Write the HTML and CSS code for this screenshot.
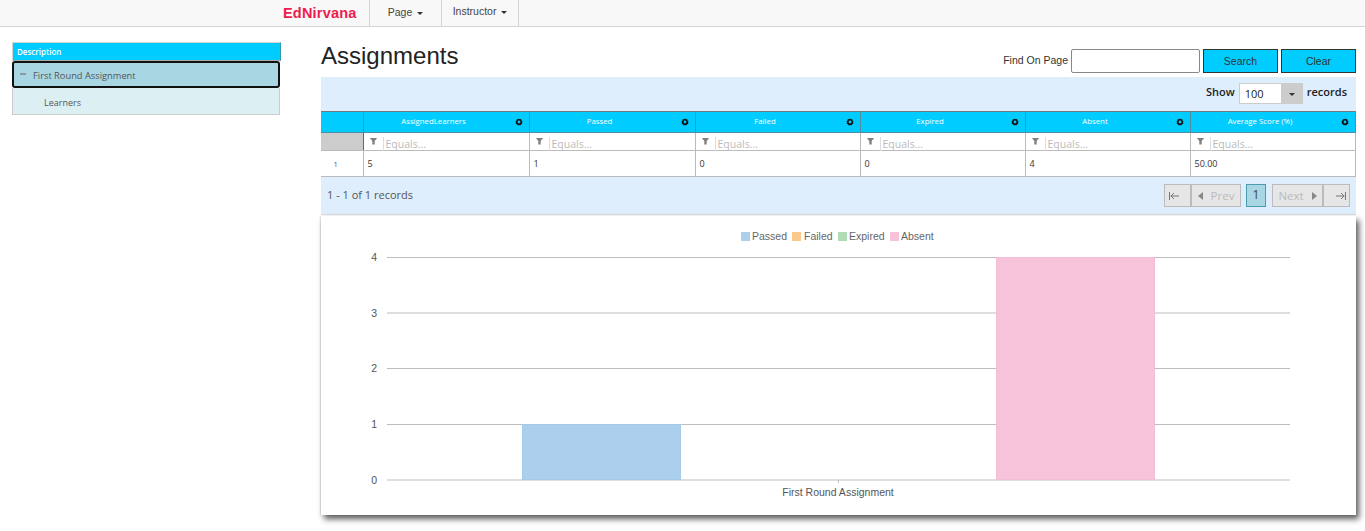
FILE: index.html
```html
<!DOCTYPE html>
<html lang="en">

<head>
    <meta charset="UTF-8">
    <meta name="viewport" content="width=device-width, initial-scale=1.0">
    <title>Assignments</title>
    <link rel="stylesheet" href="styles.css">
</head>

<body>
    <nav class="navbar">
        <a class="brand">EdNirvana</a>
        <a class="nav-item">Page <span class="caret"></span></a>
        <a class="nav-item nav-item-up">Instructor <span class="caret"></span></a>
    </nav>

    <div class="page">
        <aside class="tree">
            <div class="tree-head">Description</div>
            <div class="tree-row tree-selected"><span class="tree-minus"></span>First Round Assignment</div>
            <div class="tree-row tree-child">Learners</div>
        </aside>

        <main class="main">
            <div class="title-row">
                <h1>Assignments</h1>
                <form class="find-form">
                    <label for="find">Find On Page</label>
                    <input id="find" class="find-input" type="text">
                    <button class="btn" type="button">Search</button>
                    <button class="btn" type="button">Clear</button>
                </form>
            </div>

            <div class="toolbar">
                <span>Show</span>
                <div class="page-size">
                    <span class="page-size-value">100</span>
                    <span class="page-size-arrow"><span class="caret"></span></span>
                </div>
                <span>records</span>
            </div>

            <table class="grid">
                <colgroup>
                    <col class="col-index">
                    <col span="2" class="col-wide">
                    <col span="4" class="col-data">
                </colgroup>
                <thead>
                    <tr class="head-row">
                        <th></th>
                        <th>AssignedLearners<svg class="gear" viewBox="0 0 8 8"><use href="#gear"></use></svg></th>
                        <th>Passed<svg class="gear" viewBox="0 0 8 8"><use href="#gear"></use></svg></th>
                        <th>Failed<svg class="gear" viewBox="0 0 8 8"><use href="#gear"></use></svg></th>
                        <th>Expired<svg class="gear" viewBox="0 0 8 8"><use href="#gear"></use></svg></th>
                        <th>Absent<svg class="gear" viewBox="0 0 8 8"><use href="#gear"></use></svg></th>
                        <th>Average Score (%)<svg class="gear" viewBox="0 0 8 8"><use href="#gear"></use></svg></th>
                    </tr>
                    <tr class="filter-row">
                        <td class="filter-blank"></td>
                        <td><span class="funnel"></span><span class="filter-text">Equals...</span></td>
                        <td><span class="funnel"></span><span class="filter-text">Equals...</span></td>
                        <td><span class="funnel"></span><span class="filter-text">Equals...</span></td>
                        <td><span class="funnel"></span><span class="filter-text">Equals...</span></td>
                        <td><span class="funnel"></span><span class="filter-text">Equals...</span></td>
                        <td><span class="funnel"></span><span class="filter-text">Equals...</span></td>
                    </tr>
                </thead>
                <tbody>
                    <tr class="data-row">
                        <td class="row-num">1</td>
                        <td>5</td>
                        <td>1</td>
                        <td>0</td>
                        <td>0</td>
                        <td>4</td>
                        <td>50.00</td>
                    </tr>
                </tbody>
            </table>

            <div class="pager">
                <span class="pager-info">1 - 1 of 1 records</span>
                <div class="pager-buttons">
                    <div class="pager-group">
                        <span class="pager-btn pager-edge pager-first">
                            <svg class="pager-icon" viewBox="0 0 10 8"><path d="M.5 0v8M10 4H1.5M5 1 2 4l3 3" fill="none" stroke="#777" stroke-width="1"/></svg>
                        </span>
                        <span class="pager-btn"><span class="tri-left"></span>Prev</span>
                    </div>
                    <span class="pager-current">1</span>
                    <div class="pager-group">
                        <span class="pager-btn pager-next">Next<span class="tri-right"></span></span>
                        <span class="pager-btn pager-edge pager-last">
                            <svg class="pager-icon" viewBox="0 0 10 8"><path d="M9.5 0v8M0 4h8.5M5 1l3 3-3 3" fill="none" stroke="#777" stroke-width="1"/></svg>
                        </span>
                    </div>
                </div>
            </div>

            <section class="chart-card">
                <svg class="chart" width="1035" height="299" viewBox="321 216 1035 299">
                    <g class="legend">
                        <rect x="741" y="232" width="9" height="9" fill="#abcfed"/>
                        <text x="752" y="240">Passed</text>
                        <rect x="792" y="232" width="9" height="9" fill="#fbc98c"/>
                        <text x="804" y="240">Failed</text>
                        <rect x="838" y="232" width="9" height="9" fill="#afdcb4"/>
                        <text x="849" y="240">Expired</text>
                        <rect x="890" y="232" width="9" height="9" fill="#f7c3da"/>
                        <text x="901" y="240">Absent</text>
                    </g>
                    <g class="gridlines">
                        <path d="M387 257.5H1290M387 313H1290M387 368.5H1290M387 424.5H1290M387 480H1290M838.5 480v3"/>
                    </g>
                    <rect class="bar-passed" x="522.5" y="424.5" width="158" height="55"/>
                    <rect class="bar-absent" x="996.5" y="257.5" width="158" height="222"/>
                    <g class="axis-y">
                        <text x="377" y="261">4</text>
                        <text x="377" y="317">3</text>
                        <text x="377" y="372">2</text>
                        <text x="377" y="428">1</text>
                        <text x="377" y="484">0</text>
                    </g>
                    <text class="axis-x" x="838" y="496">First Round Assignment</text>
                </svg>
            </section>
        </main>
    </div>

    <svg class="defs" width="0" height="0">
        <symbol id="gear" viewBox="0 0 8 8">
            <path d="M4 0.4 4.8 1.3 6.2 1 6.4 2.4 7.6 3.2 6.9 4.4 7.4 5.7 6 6.2 5.3 7.5 4 6.9 2.7 7.5 2 6.2 .6 5.7 1.1 4.4 .4 3.2 1.6 2.4 1.8 1 3.2 1.3Z" fill="#111"/>
            <circle cx="4" cy="4" r="1.4" fill="#0cf"/>
        </symbol>
    </svg>
</body>

</html>
```

FILE: styles.css
```css
* {
    box-sizing: border-box;
}

body {
    margin: 0;
    min-height: 531px;
    background: #fff;
    font-family: 'Open Sans', 'Noto Sans', sans-serif;
    color: #333;
}

.navbar {
    display: flex;
    height: 27px;
    padding-left: 283px;
    background: #f8f8f8;
    border-bottom: 1px solid #d4d4d4;
    font-family: 'Liberation Sans', Arial, sans-serif;
}

.brand {
    width: 86px;
    padding-top: 5px;
    font-size: 14.5px;
    font-weight: bold;
    color: #ee1c4e;
    letter-spacing: .2px;
}

.nav-item {
    width: 72px;
    height: 26px;
    padding-top: 6px;
    border-left: 1px solid #d4d4d4;
    font-size: 10.5px;
    color: #444;
    text-align: center;
}

.nav-item-up {
    width: 78px;
    padding-top: 5px;
    border-right: 1px solid #d4d4d4;
}

.caret {
    display: inline-block;
    vertical-align: middle;
    margin-left: 2px;
    border-top: 3px solid #333;
    border-left: 3px solid transparent;
    border-right: 3px solid transparent;
}

.page {
    display: flex;
    align-items: flex-start;
}

.tree {
    width: 269px;
    margin: 15px 0 0 12px;
    font-size: 9px;
}

.tree-head {
    height: 19px;
    padding: 3px 4px;
    background: #0cf;
    border: 1px solid #d6d6d6;
    border-right: 1px solid #39a;
    border-bottom: 1px solid #aaa;
    font-size: 8px;
    font-weight: 600;
    color: #fff;
}

.tree-row {
    width: 268px;
    display: flex;
    align-items: center;
    padding-top: 2px;
    color: #555;
}

.tree-selected {
    height: 27px;
    padding-left: 6px;
    background: #a8d6e3;
    border: 2px solid #111;
    border-radius: 3px;
    font-size: 9.3px;
}

.tree-minus {
    width: 6px;
    height: 2px;
    margin: -4px 7px 0 0;
    background: #8a9aa0;
}

.tree-child {
    height: 27px;
    padding-left: 31px;
    background: #dcf0f4;
    border: 1px solid #ccc;
    border-top: 0;
}

.main {
    width: 1035px;
    margin-left: 40px;
}

.title-row {
    display: flex;
    align-items: flex-start;
    justify-content: space-between;
    height: 50px;
}

h1 {
    margin: 0;
    padding-top: 15px;
    font-family: 'Liberation Sans', Arial, sans-serif;
    font-size: 24px;
    font-weight: normal;
    color: #222;
}

.find-form {
    display: flex;
    align-items: center;
    margin: 22px 0 0 0;
    font-family: 'Liberation Sans', Arial, sans-serif;
    font-size: 10.5px;
    color: #333;
}

.find-form label {
    margin: -2px 3px 0 0;
}

.find-input {
    width: 129px;
    height: 24px;
    margin-right: 3px;
    background: #fff;
    border: 1px solid #888;
    border-radius: 2px;
}

.btn {
    width: 75px;
    height: 24px;
    margin-right: 3px;
    padding: 0;
    background: #0cf;
    border: 1px solid #333;
    font: inherit;
    color: #333;
}

.btn:last-child {
    margin-right: 0;
}

.toolbar {
    display: flex;
    align-items: center;
    justify-content: flex-end;
    gap: 4px;
    height: 34px;
    padding: 0 9px 5px 0;
    background: #deeefd;
    font-size: 11px;
    font-weight: 600;
    color: #222;
}

.page-size {
    display: flex;
    width: 64px;
    height: 21px;
    margin: 3px 0 0;
    background: #fff;
    border: 1px solid #ccc;
    font-weight: normal;
}

.page-size-value {
    flex: 1;
    padding: 2px 0 0 5px;
}

.page-size-arrow {
    display: flex;
    align-items: center;
    justify-content: center;
    width: 21px;
    padding-top: 2px;
    background: #ccc;
}

.grid {
    width: 1034px;
    table-layout: fixed;
    border-collapse: collapse;
}

.col-index {
    width: 42px;
}

.col-wide {
    width: 166px;
}

.col-data {
    width: 165px;
}

.head-row {
    height: 21px;
}

.grid th {
    position: relative;
    padding: 0 25px 0 0;
    background: #0cf;
    border: 1px solid #4f8fa3;
    border-top-color: #777;
    font-size: 7.8px;
    line-height: 1;
    font-weight: 400;
    color: #fff;
}

.grid th:first-child {
    border-left: 0;
}

.gear {
    position: absolute;
    top: 6px;
    right: 6px;
    width: 8px;
    height: 8px;
}

.defs {
    position: absolute;
}

.filter-row {
    height: 18px;
}

.filter-row td {
    padding: 0 0 0 6px;
    background: #fff;
    border: 1px solid #bbb;
    line-height: 1;
    white-space: nowrap;
}

.grid .filter-blank {
    background: #ccc;
    border-left: 0;
    border-right-color: #666;
}

.funnel {
    display: inline-block;
    width: 8px;
    height: 7px;
    margin: 0 5px 3px 0;
    background: #808080;
    clip-path: polygon(0 0, 100% 0, 65% 50%, 65% 100%, 35% 100%, 35% 50%);
}

.filter-text {
    padding-left: 2px;
    border-left: 1px solid #ddd;
    font-size: 10.5px;
    color: #bbb;
}

.data-row {
    height: 26px;
}

.data-row td {
    padding: 0 0 0 4px;
    background: #fff;
    border: 1px solid #bbb;
    font-size: 9px;
    color: #333;
}

.grid .row-num {
    padding: 0 12px 0 0;
    border-left: 0;
    font-size: 7.5px;
    color: #5a4a8a;
    text-align: center;
}

.pager {
    display: flex;
    align-items: center;
    justify-content: space-between;
    width: 1035px;
    height: 38px;
    padding: 0 6px;
    background: #deeefd;
    border-bottom: 1px solid #ddd;
    font-size: 11px;
    color: #555;
}

.pager-info {
    margin-top: -2px;
}

.pager-buttons {
    display: flex;
    align-items: center;
    gap: 5px;
}

.pager-group {
    display: flex;
}

.pager-btn {
    display: flex;
    align-items: center;
    justify-content: center;
    gap: 8px;
    width: 50px;
    height: 23px;
    background: #e6e6e6;
    border: 1px solid #bbb;
    font-size: 11.5px;
    color: #bbb;
}

.pager-edge {
    width: 27px;
}

.pager-first {
    justify-content: flex-start;
    padding-left: 4px;
}

.pager-last {
    justify-content: flex-end;
    padding-right: 3px;
}

.pager-next {
    width: 51px;
}

.pager-icon {
    width: 10px;
    height: 8px;
}

.pager-current {
    width: 20px;
    height: 23px;
    margin-right: 1px;
    background: #a8d6e3;
    border: 1px solid #4a9cb0;
    font-size: 12px;
    text-align: center;
    line-height: 20px;
    color: #444;
}

.tri-left {
    border-right: 5px solid #888;
    border-top: 4px solid transparent;
    border-bottom: 4px solid transparent;
}

.tri-right {
    border-left: 5px solid #888;
    border-top: 4px solid transparent;
    border-bottom: 4px solid transparent;
}

.chart-card {
    width: 1035px;
    height: 299px;
    margin-top: 1px;
    background: #fff;
    box-shadow: 3px 4px 6px rgba(0, 0, 0, .65), -1px 0 1px rgba(0, 0, 0, .1);
}

.chart {
    display: block;
    font-family: 'Liberation Sans', Arial, sans-serif;
    font-size: 10.5px;
}

.legend text {
    fill: #666;
}

.gridlines path {
    fill: none;
    stroke: #bdbdbd;
    stroke-width: 1;
}

.bar-passed {
    fill: #abcfed;
    stroke: #a2cbec;
}

.bar-absent {
    fill: #f7c3da;
    stroke: #f4bdd6;
}

.axis-y text {
    fill: #555;
    text-anchor: end;
}

.axis-x {
    fill: #555;
    text-anchor: middle;
}
```
